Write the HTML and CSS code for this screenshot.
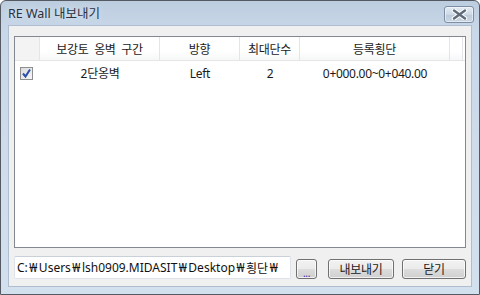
FILE: index.html
```html
<!DOCTYPE html>
<html lang="ko">
<head>
  <meta charset="UTF-8" />
  <title>RE Wall 내보내기</title>
  <link rel="stylesheet" href="styles.css">
</head>
<body>
  <div class="window">
    <div class="titlebar">
      <span class="title">RE Wall 내보내기</span>
      <div class="close">
        <svg width="17" height="11" viewBox="0 0 17 11">
          <path d="M3 1.5 L14 9.5 M14 1.5 L3 9.5" stroke="#fff" stroke-width="4.5" stroke-linecap="round"/>
          <path d="M3 1.5 L14 9.5 M14 1.5 L3 9.5" stroke="#5f6b7a" stroke-width="2.4" stroke-linecap="round"/>
        </svg>
      </div>
    </div>

    <div class="client">
      <div class="list">
        <div class="grid head">
          <div class="cell first"></div>
          <div class="cell">보강토&nbsp; 옹벽&nbsp; 구간</div>
          <div class="cell">방향</div>
          <div class="cell">최대단수</div>
          <div class="cell">등록횡단</div>
          <div class="cell last"></div>
        </div>
        <div class="grid row">
          <div class="cell first">
            <span class="check">
              <svg width="11" height="11" viewBox="0 0 11 11">
                <path d="M2 5.5 L4.5 8.5 L9 1.5" fill="none" stroke="#2b4fa8" stroke-width="2"/>
              </svg>
            </span>
          </div>
          <div class="cell">2단옹벽</div>
          <div class="cell">Left</div>
          <div class="cell">2</div>
          <div class="cell">0+000.00~0+040.00</div>
          <div class="cell"></div>
        </div>
      </div>

      <div class="footer">
        <div class="path">C:<span class="won">₩</span>Users<span class="won">₩</span>lsh0909.MIDASIT<span class="won">₩</span>Desktop<span class="won">₩</span>횡단<span class="won">₩</span></div>
        <button class="btn small">...</button>
        <button class="btn export">내보내기</button>
        <button class="btn closebtn">닫기</button>
      </div>
    </div>
  </div>
</body>
</html>
```

FILE: styles.css
```css
body {
  margin: 0;
  background: #fff;
  font-family: "Noto Sans", "Noto Sans CJK KR", sans-serif;
  font-size: 12px;
  color: #000;
}
.window {
  width: 480px;
  height: 295px;
  box-sizing: border-box;
  border: 1px solid #555a62;
  border-radius: 6px 6px 0 0;
  background: linear-gradient(#bccddf, #c9d8e9 30px, #d3e0ee);
  display: flex;
  flex-direction: column;
}
.titlebar {
  height: 23px;
  display: flex;
  align-items: center;
  padding-left: 7px;
}
.title {
  color: #2a3140;
  font-size: 12.5px;
  text-shadow: 0 0 6px #e6eef7;
}
.close {
  margin-left: auto;
  margin-right: 5px;
  margin-top: 3px;
  width: 28px;
  height: 15px;
  border: 1px solid #7d8ea3;
  border-radius: 3px;
  background: linear-gradient(#e4ecf5, #cdd9e6 50%, #bccbdb 51%, #c9d6e4);
  box-shadow: inset 0 0 0 1px rgba(255,255,255,0.5);
  display: flex;
  align-items: center;
  justify-content: center;
}
.client {
  flex: 1;
  margin: 1px 7px 7px 7px;
  background: #f0f0f0;
  border: 1px solid #aebdcf;
  padding: 10px 5px 0 5px;
  display: flex;
  flex-direction: column;
}
.list {
  height: 210px;
  border: 1px solid #828790;
  background: #fff;
}
.grid {
  display: grid;
  grid-template-columns: 25px 120px 80px 60px 150px 1fr;
}
.cell {
  display: flex;
  align-items: center;
  justify-content: center;
  letter-spacing: -0.3px;
  color: #1a1a1a;
}
.head {
  height: 23px;
  border-bottom: 1px solid #e5e5e5;
}
.head .cell {
  border-right: 1px solid #e3e5e8;
  background: linear-gradient(#ffffff, #ffffff 60%, #f6f7f8);
}
.head .cell.first {
  background: #f3f3f3;
}
.head .cell.last {
  margin-right: 2px;
}
.row {
  height: 24px;
}
.row .cell.first {
  justify-content: flex-start;
  padding-left: 5px;
}
.check {
  width: 11px;
  height: 11px;
  border: 1px solid #8f8f8f;
  background: linear-gradient(135deg, #dcdcdc, #f6f6f6);
  display: flex;
}
.footer {
  display: flex;
  align-items: center;
  margin-top: 8px;
}
.path {
  width: 273px;
  height: 21px;
  border: 1px solid #dce3ea;
  border-top-color: #c9d0d8;
  border-radius: 2px;
  background: #fff;
  display: flex;
  align-items: center;
  padding-left: 2px;
  color: #111;
}
.won {
  margin: 0 1.5px;
}
.btn {
  height: 20px;
  margin-top: 2px;
  box-sizing: border-box;
  border: 1px solid #707070;
  border-radius: 3px;
  background: linear-gradient(#f2f2f2, #ebebeb 50%, #dddddd 51%, #cfcfcf);
  box-shadow: inset 0 0 0 1px rgba(255,255,255,0.7);
  font-family: inherit;
  font-size: 12px;
  letter-spacing: -0.3px;
  padding: 0;
  color: #1a1a1a;
}
.btn.small {
  width: 21px;
  margin-left: 5px;
  color: #3b2aa0;
  font-size: 10px;
  line-height: 20px;
  padding-top: 3px;
}
.btn.export {
  width: 66px;
  margin-left: 11px;
}
.btn.closebtn {
  width: 64px;
  margin-left: 8px;
}
```
